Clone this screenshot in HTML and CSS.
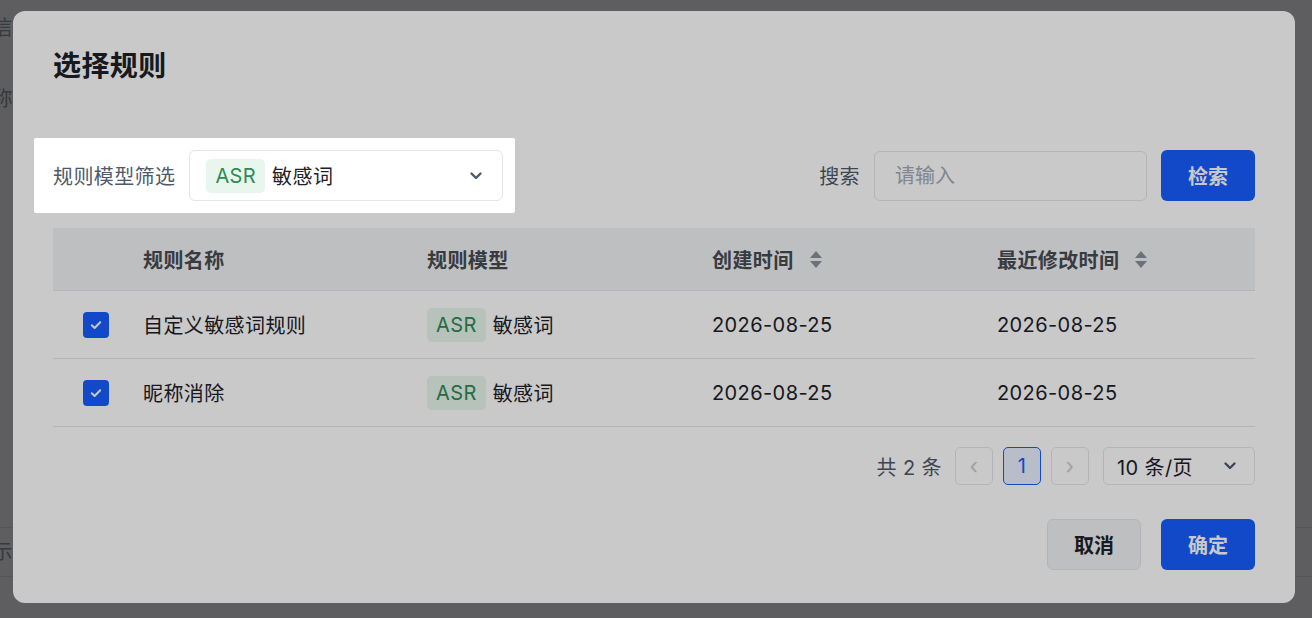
FILE: index.html
```html
<!DOCTYPE html>
<html lang="zh-CN">
<head>
  <meta charset="UTF-8">
  <meta name="viewport" content="width=device-width, initial-scale=1.0">
  <title>选择规则</title>
  <link rel="stylesheet" href="styles.css">
</head>
<body>
  <!-- 背后的页面 -->
  <div class="page">
    <div class="page-item page-item-top">通信</div>
    <div class="page-item">名称</div>
    <div class="page-spacer"></div>
    <div class="page-line"></div>
    <div class="page-item">展示</div>
    <div class="page-line"></div>
  </div>

  <!-- 弹窗 -->
  <div class="mask">
    <div class="modal">
      <h2 class="modal-title">选择规则</h2>

      <div class="toolbar">
        <div class="filter spot">
          <span class="filter-label">规则模型筛选</span>
          <div class="select">
            <span class="tag">ASR</span>
            <span class="select-text">敏感词</span>
            <svg class="chevron" viewBox="0 0 16 16" width="16" height="16"><path d="M3.5 5.5L8 10l4.5-4.5" fill="none" stroke="#4e5969" stroke-width="2.4" stroke-linecap="round" stroke-linejoin="round"/></svg>
          </div>
        </div>
        <div class="search">
          <span class="search-label">搜索</span>
          <input class="search-input" type="text" placeholder="请输入">
          <button class="btn btn-primary">检索</button>
        </div>
      </div>

      <div class="table">
        <div class="tr th">
          <div class="td"></div>
          <div class="td">规则名称</div>
          <div class="td">规则模型</div>
          <div class="td">创建时间 <span class="sorter"><i class="up"></i><i class="down"></i></span></div>
          <div class="td">最近修改时间 <span class="sorter"><i class="up"></i><i class="down"></i></span></div>
        </div>
        <div class="tr">
          <div class="td"><span class="checkbox"><svg viewBox="0 0 14 14" width="14" height="14"><path d="M2.8 7.3l2.8 2.7 5.6-5.8" fill="none" stroke="#fff" stroke-width="2" stroke-linecap="round" stroke-linejoin="round"/></svg></span></div>
          <div class="td">自定义敏感词规则</div>
          <div class="td"><span class="tag">ASR</span>敏感词</div>
          <div class="td">2026-08-25</div>
          <div class="td">2026-08-25</div>
        </div>
        <div class="tr">
          <div class="td"><span class="checkbox"><svg viewBox="0 0 14 14" width="14" height="14"><path d="M2.8 7.3l2.8 2.7 5.6-5.8" fill="none" stroke="#fff" stroke-width="2" stroke-linecap="round" stroke-linejoin="round"/></svg></span></div>
          <div class="td">昵称消除</div>
          <div class="td"><span class="tag">ASR</span>敏感词</div>
          <div class="td">2026-08-25</div>
          <div class="td">2026-08-25</div>
        </div>
      </div>

      <div class="pagination">
        <span class="total">共 2 条</span>
        <span class="pager disabled">&lsaquo;</span>
        <span class="pager active">1</span>
        <span class="pager disabled">&rsaquo;</span>
        <div class="page-size">
          <span>10 条/页</span>
          <svg viewBox="0 0 16 16" width="16" height="16"><path d="M3.5 5.5L8 10l4.5-4.5" fill="none" stroke="#4e5969" stroke-width="2.4" stroke-linecap="round" stroke-linejoin="round"/></svg>
        </div>
      </div>

      <div class="modal-footer">
        <button class="btn btn-default">取消</button>
        <button class="btn btn-primary">确定</button>
      </div>
    </div>
  </div>
</body>
</html>
```

FILE: styles.css
```css
* { box-sizing: border-box; }
body {
  margin: 0;
  background: #eff0f4;
  font-family: Inter, "Noto Sans CJK SC", "Liberation Sans", sans-serif;
  font-size: 20px;
  letter-spacing: 0.4px;
  color: #1d2129;
  overflow: hidden;
}

/* 背后页面 */
.page { padding-top: 14px; }
.page-item { margin-left: -28px; color: #8a929e; font-size: 20px; line-height: 28px; }
.page-item-top { margin-bottom: 43px; }
.page-spacer { height: 404px; }
.page-line { height: 1px; background: #d5d8de; margin: 10px 0; }

/* 遮罩与弹窗 */
.mask {
  position: fixed;
  top: 0; left: 0; right: 0; bottom: 0;
  background: rgba(0, 0, 0, 0.5);
  padding: 11px 0 0 13px;
}
.modal {
  width: 1282px;
  height: 592px;
  background: #fff;
  border-radius: 12px;
  padding: 35px 40px 32px;
}
.modal-title {
  margin: 0;
  font-size: 28px;
  line-height: 40px;
  font-weight: 700;
  color: #1d2129;
}

/* 引导高亮 */
.spot { position: relative; }
.spot::after {
  content: '';
  position: absolute;
  top: -12px; right: -12px; bottom: -12px; left: -19px;
  border-radius: 2px;
  box-shadow: 0 0 0 3000px rgba(0, 0, 0, 0.21);
  pointer-events: none;
  z-index: 10;
}

/* 工具栏 */
.toolbar {
  display: flex;
  justify-content: space-between;
  align-items: center;
  margin-top: 64px;
  height: 51px;
}
.filter, .search { display: flex; align-items: center; gap: 14px; }
.filter-label, .search-label { color: #4e5969; }
.select {
  width: 314px;
  height: 51px;
  border: 1px solid #e5e6eb;
  border-radius: 6px;
  display: flex;
  align-items: center;
  padding: 0 18px 0 16px;
}
.select-text { margin-left: 7px; flex: 1; }
.tag {
  display: inline-flex;
  align-items: center;
  justify-content: center;
  height: 34px;
  padding: 0 9px;
  border-radius: 5px;
  background: #e8f6ee;
  color: #2f8a55;
}
.search-input {
  width: 273px;
  height: 50px;
  border: 1px solid #e5e6eb;
  border-radius: 6px;
  padding: 0 20px;
  font: inherit;
  color: #1d2129;
  outline: none;
}
.search-input::placeholder { color: #a4a9b3; }
.btn {
  width: 94px;
  height: 51px;
  border-radius: 6px;
  font: inherit;
  font-weight: 700;
  cursor: pointer;
}
.btn-primary { background: #165dff; color: #fff; border: none; }
.btn-default { background: #f2f3f5; color: #1d2129; border: 1px solid #e5e6eb; }

/* 表格 */
.table { margin-top: 27px; }
.tr {
  display: grid;
  grid-template-columns: 70px 284px 285px 285px 1fr;
  height: 68px;
  border-bottom: 1px solid #e5e6eb;
  align-items: center;
}
.th {
  height: 63px;
  background: #f2f3f5;
  font-weight: 600;
  color: #474b52;
}
.td { padding-left: 20px; display: flex; align-items: center; }
.td:first-child { padding-left: 30px; }
.td .tag { margin-right: 7px; }
.checkbox {
  width: 26px;
  height: 26px;
  border-radius: 4px;
  background: #165dff;
  display: flex;
  align-items: center;
  justify-content: center;
}
.sorter {
  display: inline-flex;
  flex-direction: column;
  gap: 3px;
  margin-left: 16px;
}
.sorter i { width: 0; height: 0; border-left: 6px solid transparent; border-right: 6px solid transparent; }
.sorter .up { border-bottom: 7px solid #86909c; }
.sorter .down { border-top: 7px solid #86909c; }

/* 分页 */
.pagination {
  display: flex;
  justify-content: flex-end;
  align-items: center;
  gap: 10px;
  margin-top: 20px;
  height: 38px;
}
.total { margin-right: 3px; color: #4e5969; }
.pager {
  width: 38px;
  height: 38px;
  border: 1px solid #e5e6eb;
  border-radius: 5px;
  display: flex;
  align-items: center;
  justify-content: center;
}
.pager.disabled { color: #c9cdd4; font-size: 22px; }
.pager.active { border-color: #165dff; background: #e8f0ff; color: #165dff; }
.page-size {
  width: 152px;
  height: 38px;
  margin-left: 4px;
  border: 1px solid #e5e6eb;
  border-radius: 5px;
  display: flex;
  align-items: center;
  justify-content: space-between;
  padding: 0 16px 0 13px;
}

/* 底部按钮 */
.modal-footer {
  display: flex;
  justify-content: flex-end;
  gap: 20px;
  margin-top: 34px;
}
```
